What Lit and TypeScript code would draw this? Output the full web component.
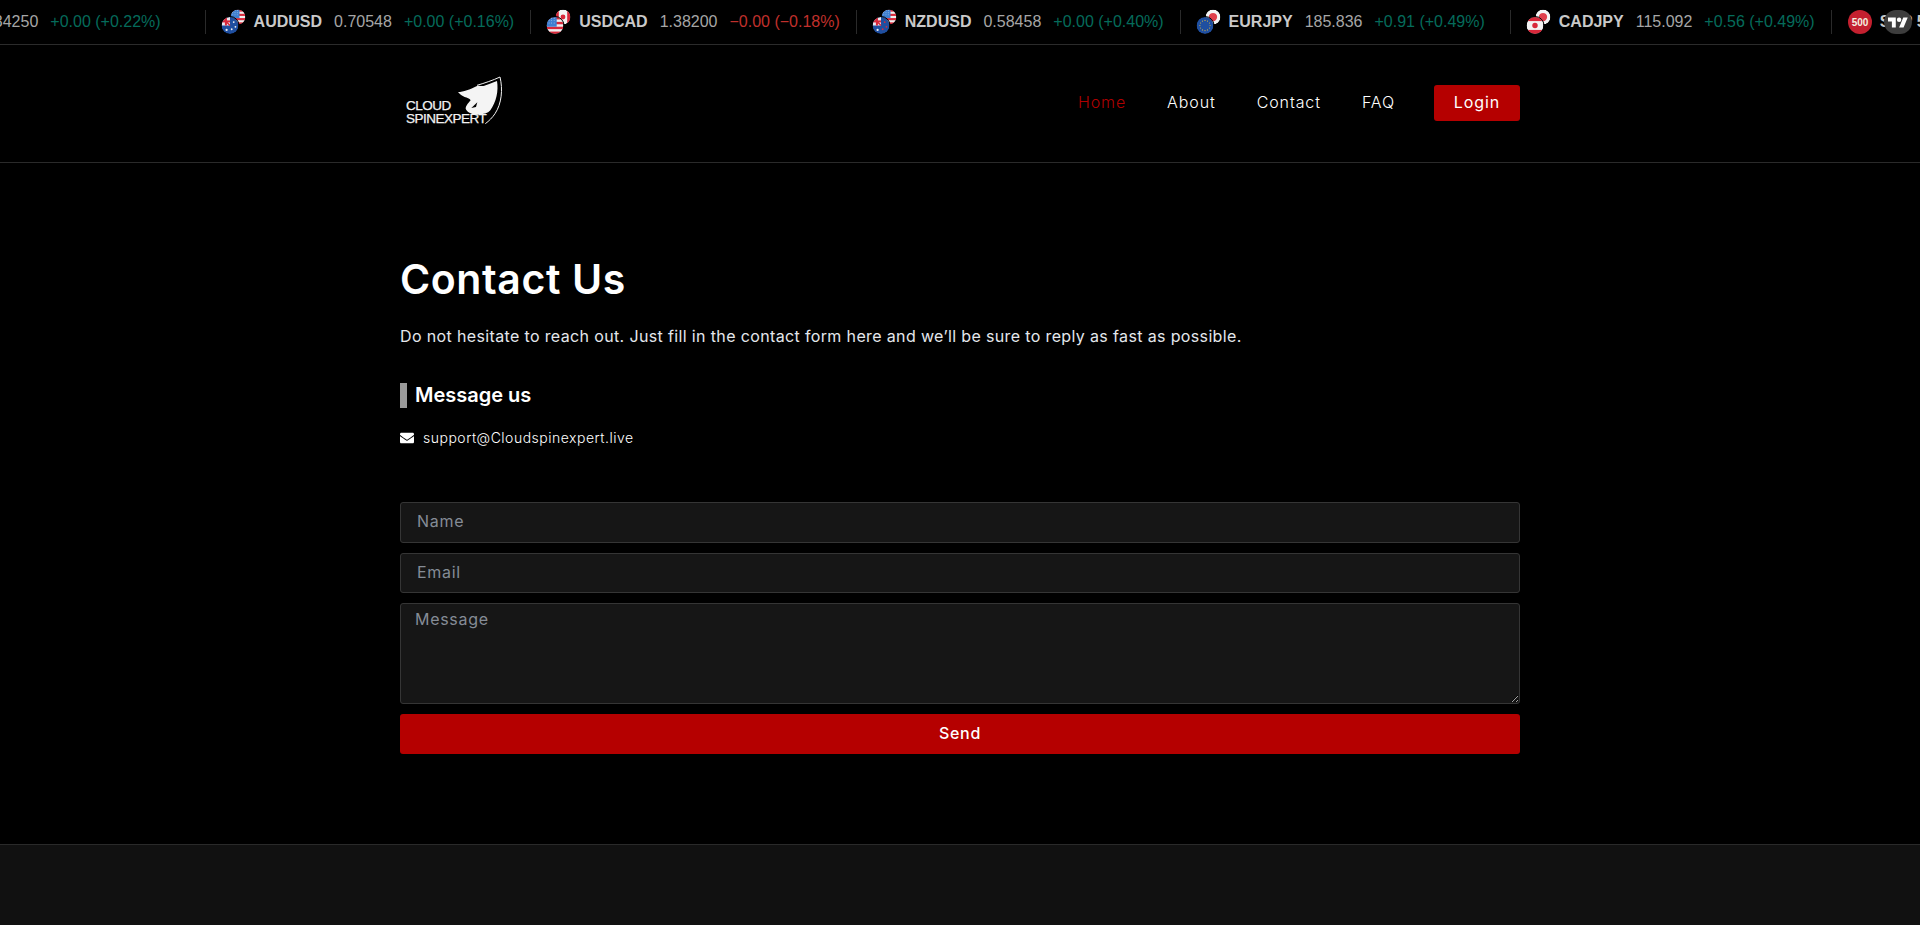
import { LitElement, html, css, svg } from "lit";
import { customElement } from "lit/decorators.js";

type Flag = "usd" | "aud" | "cad" | "cadh" | "jpy" | "eur" | "nzd";

// one coin of a pair, cx/cy/r in the 26x26 box of the pair
const coin = (flag: Flag, cx: number, cy: number, r: number) => {
  const id = `c-${flag}-${cx}`;
  const x = cx - r;
  const y = cy - r;
  const d = r * 2;
  let art = svg``;
  if (flag === "usd") {
    const h = d / 7;
    art = svg`<rect x=${x} y=${y} width=${d} height=${d} fill="#f0f0f0"/>
      ${[0, 2, 4, 6].map((i) => svg`<rect x=${x} y=${y + i * h} width=${d} height=${h} fill="#d8283a"/>`)}
      <rect x=${x} y=${y} width=${d * 0.6} height=${h * 4} fill="#3f7fd0"/>
      ${[0.5, 1.5, 2.5].map((j) => [0.15, 0.3, 0.45].map((k) => svg`<circle cx=${x + d * k} cy=${y + j * h} r="0.45" fill="#cfe0f5"/>`))}`;
  } else if (flag === "aud" || flag === "nzd") {
    const star = flag === "aud" ? "#f2f2f2" : "#d8283a";
    art = svg`<rect x=${x} y=${y} width=${d} height=${d} fill="#1f4fa0"/>
      <rect x=${x} y=${y} width=${d * 0.5} height=${d * 0.5} fill="#e8e8f0"/>
      <path d="M${x} ${y}L${x + d * 0.5} ${y + d * 0.5}" stroke="#d8283a" stroke-width="1.5"/>
      <rect x=${x + d * 0.2} y=${y} width=${d * 0.12} height=${d * 0.5} fill="#d8283a"/>
      <rect x=${x} y=${y + d * 0.2} width=${d * 0.5} height=${d * 0.12} fill="#d8283a"/>
      <circle cx=${x + d * 0.72} cy=${y + d * 0.3} r="0.9" fill=${star}/>
      <circle cx=${x + d * 0.82} cy=${y + d * 0.58} r="0.9" fill=${star}/>
      <circle cx=${x + d * 0.6} cy=${y + d * 0.72} r="0.9" fill=${star}/>
      <circle cx=${x + d * 0.3} cy=${y + d * 0.76} r="1.1" fill="#f2f2f2"/>`;
  } else if (flag === "cad") {
    art = svg`<rect x=${x} y=${y} width=${d} height=${d} fill="#f2f2f2"/>
      <rect x=${x} y=${y} width=${d * 0.22} height=${d} fill="#d8283a"/>
      <rect x=${x + d * 0.78} y=${y} width=${d * 0.22} height=${d} fill="#d8283a"/>
      <circle cx=${cx} cy=${cy} r=${r * 0.32} fill="#d8283a"/>`;
  } else if (flag === "cadh") {
    art = svg`<rect x=${x} y=${y} width=${d} height=${d} fill="#f2f2f2"/>
      <rect x=${x} y=${y} width=${d} height=${d * 0.24} fill="#d8283a"/>
      <rect x=${x} y=${y + d * 0.76} width=${d} height=${d * 0.24} fill="#d8283a"/>
      <circle cx=${cx} cy=${cy} r=${r * 0.32} fill="#d8283a"/>`;
  } else if (flag === "jpy") {
    art = svg`<rect x=${x} y=${y} width=${d} height=${d} fill="#f4f4f4"/>
      <circle cx=${cx} cy=${cy} r=${r * 0.55} fill="#e0404c"/>`;
  } else {
    art = svg`<rect x=${x} y=${y} width=${d} height=${d} fill="#1f4fa0"/>
      ${Array.from({ length: 12 }, (_, i) => svg`<circle cx=${cx + Math.cos((i * Math.PI) / 6) * r * 0.6} cy=${cy + Math.sin((i * Math.PI) / 6) * r * 0.6} r="0.55" fill="#e0b93a"/>`)}`;
  }
  return svg`<clipPath id=${id}><circle cx=${cx} cy=${cy} r=${r}/></clipPath>
    <g clip-path="url(#${id})">${art}</g>
    <circle cx=${cx} cy=${cy} r=${r + 0.5} fill="none" stroke="#000" stroke-width="1"/>`;
};

const pair = (a: Flag, b: Flag) => html`<svg class="flags" viewBox="0 0 26 26" width="26" height="26">
  ${coin(b, 17, 8, 7.5)}
  ${coin(a, 9, 16.5, 8.5)}
</svg>`;

const spx = html`<svg class="flags" viewBox="0 0 26 26" width="26" height="26">
  <circle cx="13" cy="13" r="12" fill="#c4202f"/>
  <text x="13" y="16.6" text-anchor="middle" font-family="Liberation Sans" font-size="10" font-weight="700" fill="#f4f0e0">500</text>
</svg>`;

type Row = { sym: string; price: string; ch: string; down?: boolean; icon: unknown; trail?: number };

const rows: Row[] = [
  { sym: "GBPUSD", price: "1.34250", ch: "+0.00 (+0.22%)", icon: pair("usd", "usd"), trail: 44 },
  { sym: "AUDUSD", price: "0.70548", ch: "+0.00 (+0.16%)", icon: pair("aud", "usd") },
  { sym: "USDCAD", price: "1.38200", ch: "−0.00 (−0.18%)", down: true, icon: pair("usd", "cad") },
  { sym: "NZDUSD", price: "0.58458", ch: "+0.00 (+0.40%)", icon: pair("nzd", "usd") },
  { sym: "EURJPY", price: "185.836", ch: "+0.91 (+0.49%)", icon: pair("eur", "jpy"), trail: 25 },
  { sym: "CADJPY", price: "115.092", ch: "+0.56 (+0.49%)", icon: pair("cadh", "jpy") },
  { sym: "S&P 500", price: "6,890.12", ch: "+12.40 (+0.18%)", icon: spx },
];

@customElement("app-root")
export class AppRoot extends LitElement {
  static styles = css`
    :host {
      display: flex;
      flex-direction: column;
      min-height: 925px;
      background: #000;
      color: #fff;
      font-family: Inter, "Noto Sans", sans-serif;
    }
    .ticker {
      position: relative;
      height: 44px;
      border-bottom: 1px solid #2b2b2b;
      overflow: hidden;
      flex: none;
    }
    .track {
      display: flex;
      align-items: center;
      height: 44px;
      margin-left: -148px;
      width: max-content;
      font-family: "Liberation Sans", Arial, sans-serif;
      font-size: 16px;
      white-space: nowrap;
    }
    .item {
      display: flex;
      align-items: center;
      height: 24px;
      padding-left: 15px;
      border-right: 1px solid #2a2a2a;
    }
    .flags {
      flex: none;
      margin-right: 7px;
    }
    .sym {
      font-weight: 700;
      color: #c9c9c9;
      margin-right: 12px;
    }
    .price {
      color: #a6a6a6;
      margin-right: 12px;
    }
    .ch {
      color: #056b5b;
    }
    .ch.down {
      color: #c1302c;
    }
    .tv {
      position: absolute;
      left: 1884px;
      top: 10px;
      width: 28px;
      height: 24px;
      border-radius: 12px;
      background: #3d3d3d;
      display: flex;
      align-items: center;
      justify-content: center;
    }
    header {
      flex: none;
      height: 117px;
      border-bottom: 1px solid #2a2a2a;
    }
    .bar {
      width: 1120px;
      height: 100%;
      margin: 0 auto;
      display: flex;
      align-items: center;
      justify-content: space-between;
    }
    .logo {
      position: relative;
      width: 102px;
      height: 49px;
      padding-left: 6px;
      box-sizing: border-box;
      display: flex;
      flex-direction: column;
      justify-content: flex-end;
      font-family: "Liberation Sans", Arial, sans-serif;
      font-size: 13.5px;
      line-height: 13px;
      letter-spacing: -0.5px;
      color: #f2f2f2;
      -webkit-text-stroke: 0.25px #f2f2f2;
      margin-bottom: 6px;
    }
    .logo svg {
      position: absolute;
      left: 58px;
      top: 0;
    }
    nav {
      display: flex;
      align-items: center;
      gap: 41px;
      font-size: 16px;
      font-weight: 300;
      letter-spacing: 0.9px;
      margin-bottom: 1px;
    }
    nav a {
      color: #fff;
      padding-bottom: 2px;
    }
    nav a.on {
      color: #b00000;
    }
    nav a.faq {
      margin-right: -2px;
    }
    nav a.login {
      box-sizing: border-box;
      background: #b50000;
      width: 86px;
      height: 36px;
      border-radius: 3px;
      display: flex;
      align-items: center;
      justify-content: center;
      font-weight: 400;
    }
    main {
      flex: none;
      width: 1120px;
      height: 681px;
      box-sizing: border-box;
      margin: 0 auto;
      padding-top: 92px;
    }
    h1 {
      margin: 0;
      font-size: 41px;
      line-height: 48px;
      font-weight: 600;
      letter-spacing: 0.6px;
    }
    .lead {
      margin: 21px 0 0 0;
      font-size: 16px;
      line-height: 24px;
      font-weight: 400;
      letter-spacing: 0.36px;
      color: #e4e7ec;
    }
    h2 {
      margin: 35px 0 0;
      height: 25px;
      border-left: 7px solid #9a9a9a;
      padding-left: 8px;
      font-size: 20px;
      line-height: 25px;
      font-weight: 600;
    }
    .mail {
      display: flex;
      align-items: center;
      gap: 9px;
      margin-top: 19px;
      font-size: 14px;
      line-height: 21px;
      font-weight: 300;
      letter-spacing: 0.5px;
    }
    form {
      display: flex;
      flex-direction: column;
      gap: 10px;
      margin-top: 54px;
    }
    input,
    textarea {
      display: block;
      box-sizing: border-box;
      width: 100%;
      margin: 0;
      background: #161616;
      border: 1px solid #353535;
      border-radius: 3px;
      color: #fff;
      font: 400 16px Inter, "Noto Sans", sans-serif;
      letter-spacing: 0.7px;
      outline: none;
    }
    input {
      height: 40.5px;
      padding: 0 16px 2px;
    }
    textarea {
      height: 100.5px;
      padding: 3px 14px;
      line-height: 24px;
    }
    input::placeholder,
    textarea::placeholder {
      color: #858c96;
      opacity: 1;
    }
    button {
      height: 40.5px;
      border: 0;
      border-radius: 3px;
      padding: 0 0 2px;
      background: #b50000;
      color: #fff;
      font: 500 16px Inter, "Noto Sans", sans-serif;
      letter-spacing: 0.7px;
    }
    footer {
      flex: 1;
      background: #111;
      border-top: 1px solid #2a2a2a;
    }
  `;

  render() {
    return html`
      <div class="ticker">
        <div class="track">
          ${rows.map(
            (r) => html`<div class="item" style="padding-right:${r.trail ?? 16}px">
              ${r.icon}
              <span class="sym">${r.sym}</span>
              <span class="price">${r.price}</span>
              <span class="ch ${r.down ? "down" : ""}">${r.ch}</span>
            </div>`
          )}
        </div>
        <div class="tv">
          <svg viewBox="0 0 36 28" width="20" height="16" fill="#fff">
            <path d="M14 24H7V13H0V6h14v18zM28 24h-8l7.5-18h8L28 24z" />
            <circle cx="20" cy="10" r="4" />
          </svg>
        </div>
      </div>

      <header>
        <div class="bar">
          <div class="logo">
            <svg viewBox="205 45 135 150" width="45" height="50">
              <path d="M205 93C222 93 240 86 262 75C270 72 276 77 284 74C298 70 312 64 322 60C327 90 320 122 302 148C294 157 284 160 262 161C248 160 232 154 228 143C228 134 238 124 243 118C240 112 232 110 225 108C218 105 210 100 205 93Z" fill="#f4f4f4" />
              <path d="M262 73C285 66 310 58 331 48C340 85 336 128 316 158C308 170 298 180 287 188" fill="none" stroke="#f4f4f4" stroke-width="3" />
              <path d="M245 141L263 124L259 138Z" fill="#000" />
            </svg>
            <span>CLOUD</span>
            <span>SPINEXPERT</span>
          </div>
          <nav>
            <a class="on">Home</a>
            <a>About</a>
            <a>Contact</a>
            <a class="faq">FAQ</a>
            <a class="login">Login</a>
          </nav>
        </div>
      </header>

      <main>
        <h1>Contact Us</h1>
        <p class="lead">Do not hesitate to reach out. Just fill in the contact form here and we’ll be sure to reply as fast as possible.</p>
        <h2>Message us</h2>
        <div class="mail">
          <svg viewBox="0 0 512 512" width="14" height="14" fill="#fff">
            <path d="M502.3 190.8c3.9-3.1 9.7-.2 9.7 4.7V400c0 26.5-21.5 48-48 48H48c-26.5 0-48-21.5-48-48V195.6c0-5 5.7-7.8 9.7-4.7 22.4 17.4 52.1 39.5 154.1 113.6 21.1 15.4 56.7 47.8 92.2 47.6 35.7.3 72-32.8 92.3-47.6 102-74.1 131.6-96.3 154-113.7zM256 320c23.2.4 56.6-29.2 73.4-41.4 132.7-96.3 142.8-104.7 173.4-128.7 5.8-4.5 9.2-11.5 9.2-18.9v-19c0-26.5-21.5-48-48-48H48C21.5 64 0 85.5 0 112v19c0 7.4 3.4 14.3 9.2 18.9 30.6 23.9 40.7 32.4 173.4 128.7 16.8 12.2 50.2 41.8 73.4 41.4z" />
          </svg>
          <span>support@Cloudspinexpert.live</span>
        </div>
        <form @submit=${(e: Event) => e.preventDefault()}>
          <input type="text" placeholder="Name" />
          <input type="email" placeholder="Email" />
          <textarea placeholder="Message"></textarea>
          <button type="submit">Send</button>
        </form>
      </main>

      <footer></footer>
    `;
  }
}
